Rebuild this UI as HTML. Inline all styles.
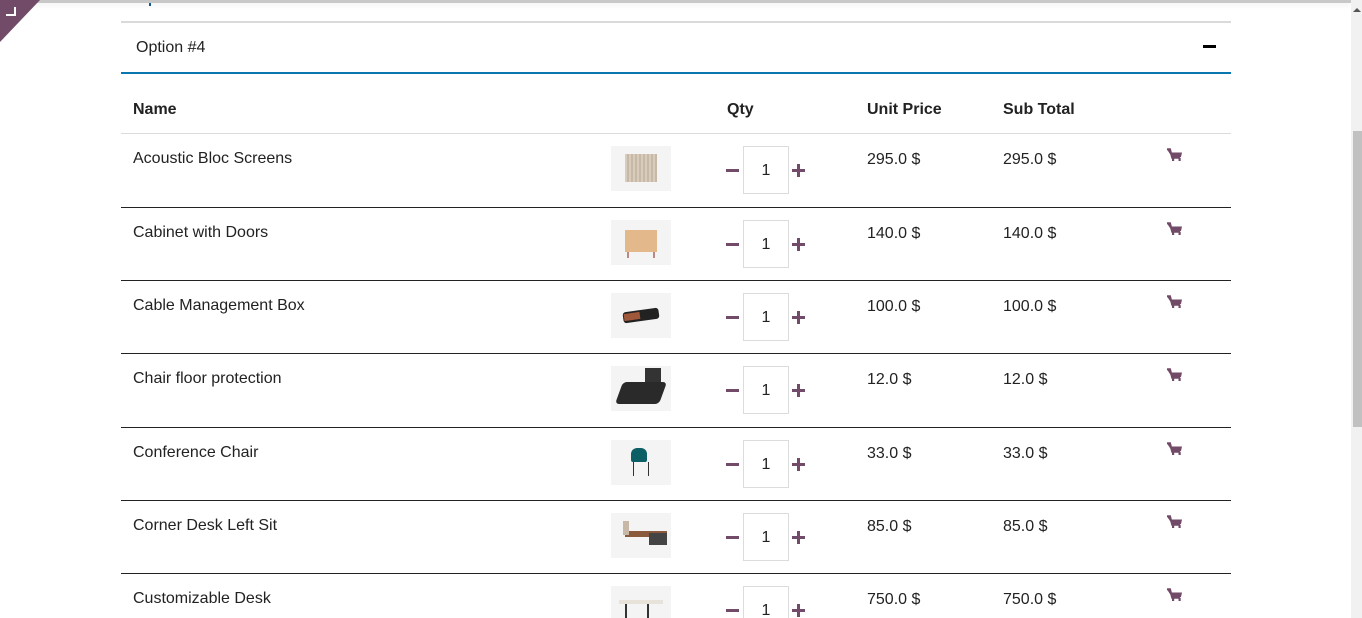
<!DOCTYPE html>
<html><head><meta charset="utf-8"><style>
*{margin:0;padding:0;box-sizing:border-box}
html,body{width:1362px;height:618px;overflow:hidden}
body{background:#fff;font-family:"Liberation Sans",sans-serif;color:#222;position:relative;font-size:16px}
.a{position:absolute}
.topline{left:0;top:0;width:1351px;height:3px;background:#c8c8c8;box-shadow:0 2px 6px rgba(0,0,0,.08)}
.corner{left:0;top:0;width:0;height:0;border-top:42px solid #714b67;border-right:40px solid transparent}
.sb{left:1351px;top:0;width:11px;height:618px;background:#f1f1f1}
.thumb{left:1353px;top:131px;width:9px;height:296px;background:#c1c1c1}
.txt{white-space:nowrap}
.row{left:121px;width:1110px;height:1px;background:#222}
.img{left:611px;width:60px;height:45px;background:#f5f4f4;overflow:hidden}
.qin{left:743px;width:46px;height:48px;border:1px solid #dcdcdc;text-align:center;line-height:48px;font-size:16px}
.mn{left:726px;width:13px;height:3px;background:#714b67}
.pl{left:792px;width:13px;height:3px;background:#714b67}
.plv{left:797px;width:3px;height:13px;background:#714b67}
</style></head><body>
<div class="a topline"></div>
<div class="a corner"></div>
<div class="a" style="left:6px;top:7px;width:10px;height:9px;border-right:2px solid #fff;border-bottom:2px solid #fff"></div>
<div class="a" style="left:149px;top:3px;width:2px;height:3px;background:#0b5a8a"></div>
<div class="a" style="left:121px;top:21px;width:1110px;height:2px;background:#dadada"></div>
<div class="a txt" style="left:136px;top:39px;font-size:16px">Option #4</div>
<div class="a" style="left:1203px;top:45px;width:13px;height:3px;background:#000"></div>
<div class="a" style="left:121px;top:72px;width:1110px;height:2px;background:#0877b0"></div>
<div class="a txt" style="left:133px;top:101px;font-weight:bold">Name</div>
<div class="a txt" style="left:727px;top:101px;font-weight:bold">Qty</div>
<div class="a txt" style="left:867px;top:101px;font-weight:bold">Unit Price</div>
<div class="a txt" style="left:1003px;top:101px;font-weight:bold">Sub Total</div>
<div class="a" style="left:121px;top:133px;width:1110px;height:1px;background:#dcdcdc"></div>
<div class="a sb"></div><div class="a thumb"></div>
<div class="a" style="left:1353px;top:8px;width:0;height:0;border-left:4px solid transparent;border-right:4px solid transparent;border-bottom:4px solid #555"></div>

<div id="rows"></div>
<script>
var d=[["Acoustic Bloc Screens","295.0 $",133,'<div class="a" style="left:14px;top:8px;width:32px;height:28px;background:repeating-linear-gradient(90deg,#d8cdbd 0 2px,#c7b9a5 2px 4px)"></div>'],
["Cabinet with Doors","140.0 $",207,'<div class="a" style="left:14px;top:10px;width:32px;height:22px;background:#e3b98c"></div><div class="a" style="left:16px;top:32px;width:2px;height:6px;background:#b88"></div><div class="a" style="left:42px;top:32px;width:2px;height:6px;background:#b88"></div>'],
["Cable Management Box","100.0 $",280,'<div class="a" style="left:12px;top:17px;width:36px;height:11px;background:#222;border-radius:3px;transform:rotate(-8deg)"></div><div class="a" style="left:13px;top:20px;width:16px;height:7px;background:#a0583a;transform:rotate(-8deg)"></div>'],
["Chair floor protection","12.0 $",353,'<div class="a" style="left:8px;top:16px;width:44px;height:22px;background:#2a2a2a;border-radius:4px;transform:skewX(-20deg)"></div><div class="a" style="left:34px;top:2px;width:16px;height:14px;background:#333"></div>'],
["Conference Chair","33.0 $",427,'<div class="a" style="left:20px;top:8px;width:16px;height:14px;background:#0d5f66;border-radius:6px 6px 2px 2px"></div><div class="a" style="left:22px;top:22px;width:16px;height:14px;border-left:1px solid #333;border-right:1px solid #333"></div>'],
["Corner Desk Left Sit","85.0 $",500,'<div class="a" style="left:14px;top:18px;width:42px;height:6px;background:#8b5a3c"></div><div class="a" style="left:38px;top:20px;width:18px;height:12px;background:#444"></div><div class="a" style="left:12px;top:8px;width:6px;height:14px;background:#c8b8a8"></div>'],
["Customizable Desk","750.0 $",573,'<div class="a" style="left:8px;top:14px;width:44px;height:4px;background:#e8e3da"></div><div class="a" style="left:14px;top:18px;width:2px;height:14px;background:#333"></div><div class="a" style="left:36px;top:18px;width:2px;height:14px;background:#333"></div>']];
var h='';
d.forEach(function(r,i){var t=r[2];
if(i>0)h+='<div class="a row" style="top:'+t+'px"></div>';
h+='<div class="a txt" style="left:133px;top:'+(t+17)+'px">'+r[0]+'</div>';
h+='<div class="a img" style="top:'+(t+13)+'px">'+r[3]+'</div>';
h+='<div class="a mn" style="top:'+(t+36)+'px"></div>';
h+='<div class="a qin" style="top:'+(t+13)+'px">1</div>';
h+='<div class="a pl" style="top:'+(t+36)+'px"></div><div class="a plv" style="top:'+(t+31)+'px"></div>';
h+='<div class="a txt" style="left:867px;top:'+(t+18)+'px">'+r[1]+'</div>';
h+='<div class="a txt" style="left:1003px;top:'+(t+18)+'px">'+r[1]+'</div>';
h+='<svg class="a" style="left:1167px;top:'+(t+15)+'px" width="16" height="13" viewBox="0 0 16 13"><path d="M0 1.5h3.5l1 3h10.5l-1 4.5H5z" fill="#714b67"/><path d="M0 1.2h3l2.2 8.5h8" stroke="#714b67" stroke-width="2" fill="none"/><rect x="5" y="10" width="2.2" height="3" fill="#714b67"/><rect x="11.5" y="10" width="2.2" height="3" fill="#714b67"/></svg>';
});
document.getElementById('rows').outerHTML=h;
</script>
</body></html>
